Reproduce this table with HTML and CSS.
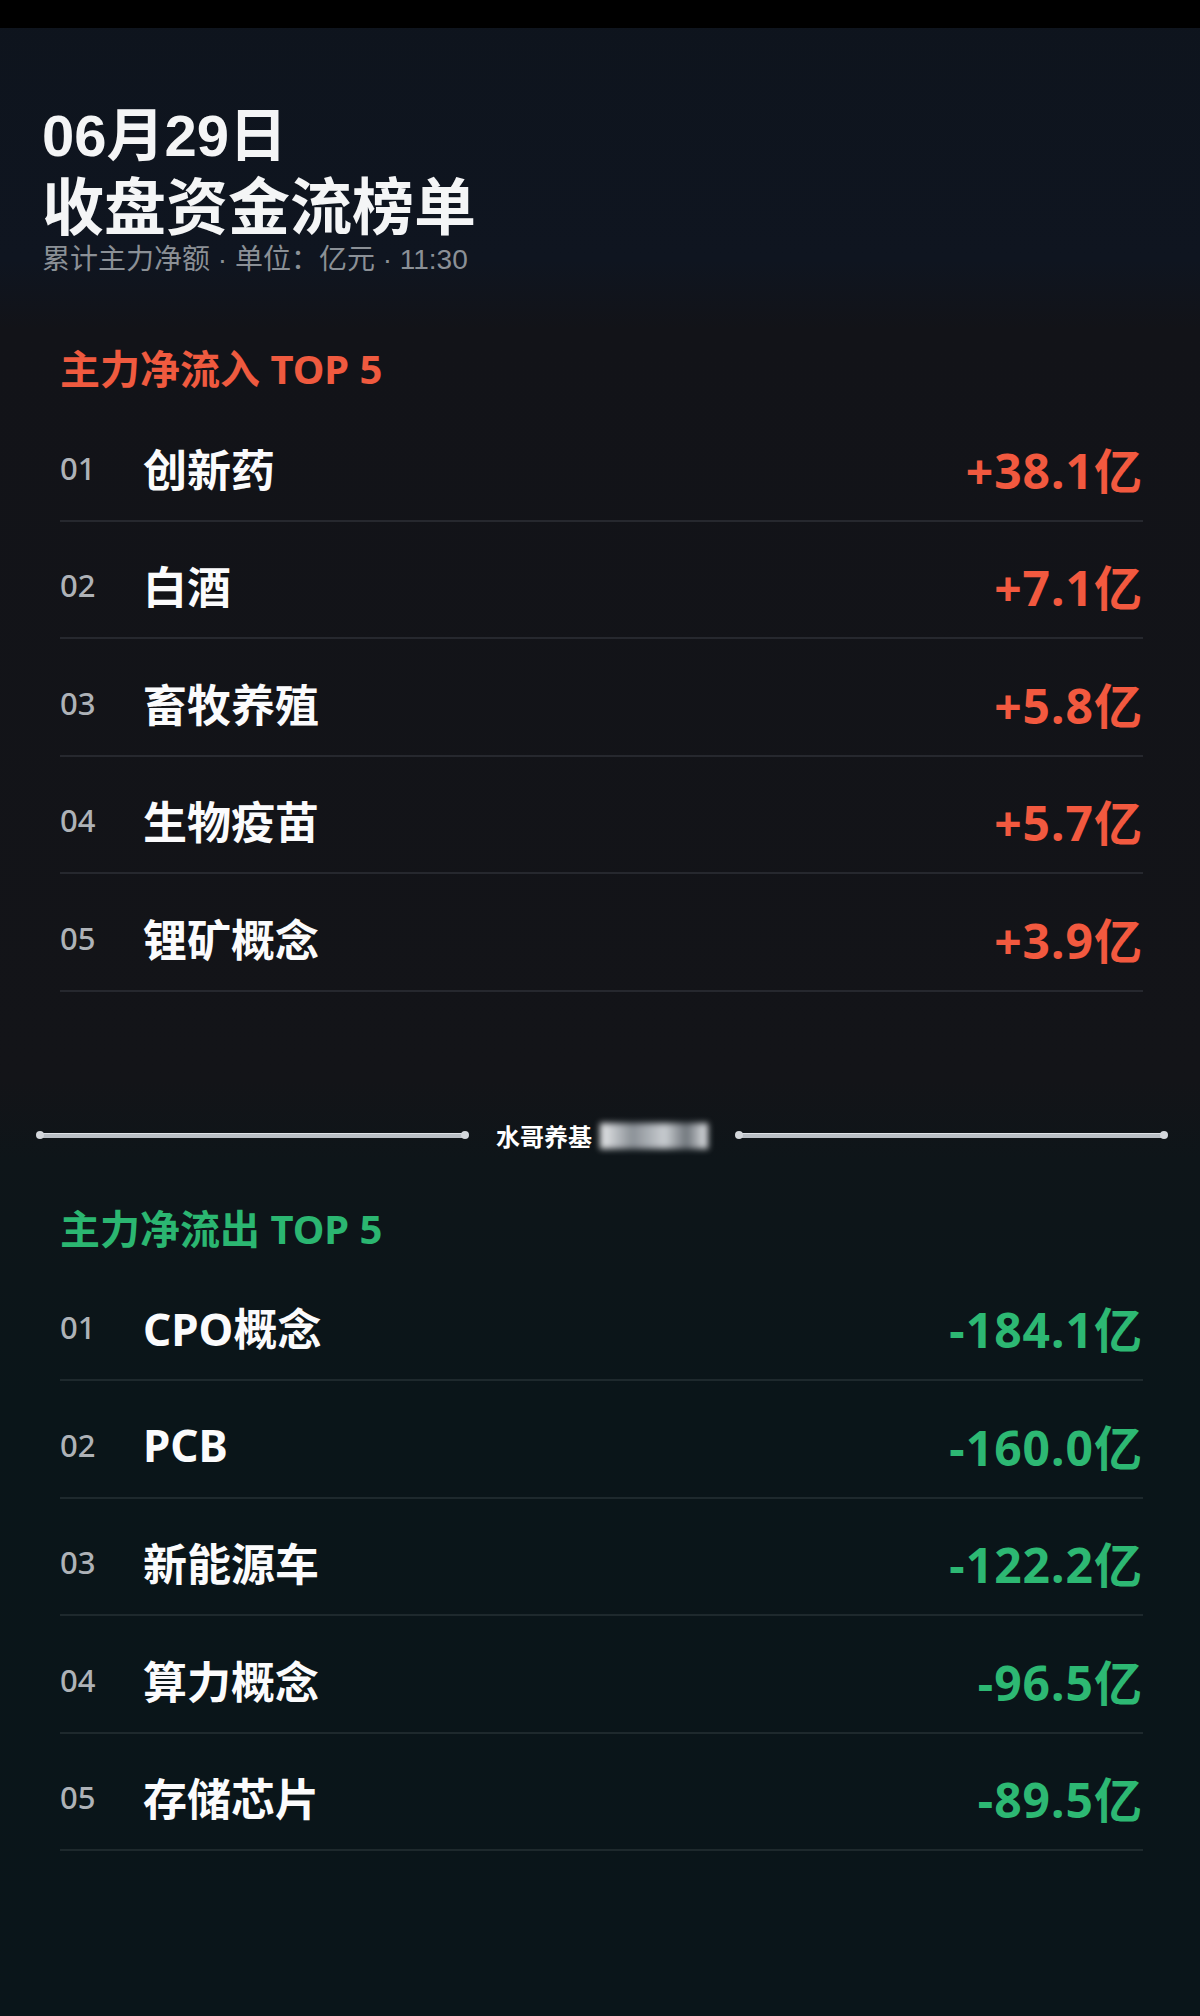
FILE: index.html
```html
<!DOCTYPE html>
<html lang="zh-CN">

<head>
    <meta charset="UTF-8">
    <meta name="viewport" content="width=device-width, initial-scale=1.0">
    <title>收盘资金流榜单</title>
    <link rel="stylesheet" href="styles.css">
</head>

<body>
    <div class="topbar"></div>

    <header class="hero">
        <h1 class="hero-date">06月29日</h1>
        <h2 class="hero-title">收盘资金流榜单</h2>
        <p class="hero-sub">累计主力净额 · 单位：亿元 · 11:30</p>
    </header>

    <section class="board board-in">
        <h3 class="board-title">主力净流入 TOP 5</h3>
        <ul class="rank">
            <li class="rank-row"><span class="rank-no">01</span><span class="rank-name">创新药</span><span class="rank-val">+38.1亿</span></li>
            <li class="rank-row"><span class="rank-no">02</span><span class="rank-name">白酒</span><span class="rank-val">+7.1亿</span></li>
            <li class="rank-row"><span class="rank-no">03</span><span class="rank-name">畜牧养殖</span><span class="rank-val">+5.8亿</span></li>
            <li class="rank-row"><span class="rank-no">04</span><span class="rank-name">生物疫苗</span><span class="rank-val">+5.7亿</span></li>
            <li class="rank-row"><span class="rank-no">05</span><span class="rank-name">锂矿概念</span><span class="rank-val">+3.9亿</span></li>
        </ul>
    </section>

    <div class="split">
        <span class="split-line"></span>
        <span class="split-mark">水哥养基 <span class="split-blur"></span></span>
        <span class="split-line"></span>
    </div>

    <section class="board board-out">
        <h3 class="board-title">主力净流出 TOP 5</h3>
        <ul class="rank">
            <li class="rank-row"><span class="rank-no">01</span><span class="rank-name">CPO概念</span><span class="rank-val">-184.1亿</span></li>
            <li class="rank-row"><span class="rank-no">02</span><span class="rank-name">PCB</span><span class="rank-val">-160.0亿</span></li>
            <li class="rank-row"><span class="rank-no">03</span><span class="rank-name">新能源车</span><span class="rank-val">-122.2亿</span></li>
            <li class="rank-row"><span class="rank-no">04</span><span class="rank-name">算力概念</span><span class="rank-val">-96.5亿</span></li>
            <li class="rank-row"><span class="rank-no">05</span><span class="rank-name">存储芯片</span><span class="rank-val">-89.5亿</span></li>
        </ul>
    </section>
</body>

</html>
```

FILE: styles.css
```css
/* dark fund-flow board */
body {
    margin: 0;
    padding: 0;
    min-height: 2016px;
    font-family: "Noto Sans", "Noto Sans CJK SC", sans-serif;
    color: #fff;
    background: linear-gradient(to bottom,
        #0e141d 0px, #0f1520 260px, #121318 330px,
        #131418 1080px, #0e1519 1160px, #0a1519 1400px, #0a151a 2016px);
}

.topbar {
    height: 28px;
    background-color: #000;
}

/* tight title stack, so a compact latin face drives the line boxes */
.hero {
    padding: 76px 42px 0;
    font-family: "Liberation Sans", "Noto Sans CJK SC", sans-serif;
}

.hero-date {
    margin: 0;
    font-size: 58px;
    line-height: 64px;
    font-weight: 700;
    color: #f4f5f6;
}

.hero-title {
    margin: 5px 0 0;
    font-size: 62px;
    line-height: 72px;
    font-weight: 700;
    color: #f4f5f6;
}

.hero-sub {
    margin: 2px 0 0;
    font-size: 28px;
    line-height: 26px;
    color: #8b9096;
}

.board {
    padding: 0 57px 0 60px;
}

.board-in {
    padding-top: 69px;
}

.board-out {
    padding-top: 58px;
}

.board-title {
    margin: 0 0 8px;
    font-size: 40px;
    line-height: 54px;
    font-weight: 700;
}

.board-in .board-title { color: #ef5a3f; }
.board-out .board-title { color: #2bb671; }

.rank {
    list-style: none;
    margin: 0;
    padding: 0;
}

.rank-row {
    display: flex;
    align-items: center;
    box-sizing: border-box;
    height: 117.5px;
    padding-top: 12px;
    border-bottom: 2px solid #26282e;
}

.board-out .rank-row {
    border-bottom-color: #1e292d;
}

.rank-no {
    width: 83px;
    font-size: 31px;
    font-weight: 500;
    color: #aeb2b7;
}

.rank-name {
    flex: 1;
    font-size: 44px;
    font-weight: 700;
    color: #fbfbfc;
}

.rank-val {
    font-size: 48px;
    font-weight: 700;
    letter-spacing: 1px;
}

.board-in .rank-val { color: #f2593f; }
.board-out .rank-val { color: #2db873; }

/* watermark divider */
.split {
    display: flex;
    align-items: center;
    gap: 30px;
    margin-top: 136px;
    padding: 0 35px 0 39px;
    height: 16px;
}

.split-line {
    position: relative;
    flex: 1;
    height: 4px;
    background-color: #b9bfc5;
    border-top: 1px solid #dde1e5;
}

.split-line::before,
.split-line::after {
    content: "";
    position: absolute;
    top: -3px;
    width: 8px;
    height: 8px;
    border-radius: 50%;
    background-color: #d3d7db;
}

.split-line::before { left: -3px; }
.split-line::after { right: -3px; }

.split-mark {
    display: flex;
    align-items: center;
    gap: 8px;
    font-family: "Noto Sans CJK SC", sans-serif;
    font-size: 24px;
    font-weight: 700;
    color: #fff;
    white-space: nowrap;
}

.split-blur {
    width: 108px;
    height: 26px;
    background: linear-gradient(to right, #e8eaec 0%, #8a9096 30%, #c9cdd1 60%, #6f757b 80%, #e3e5e8 100%);
    filter: blur(3px);
}
```
